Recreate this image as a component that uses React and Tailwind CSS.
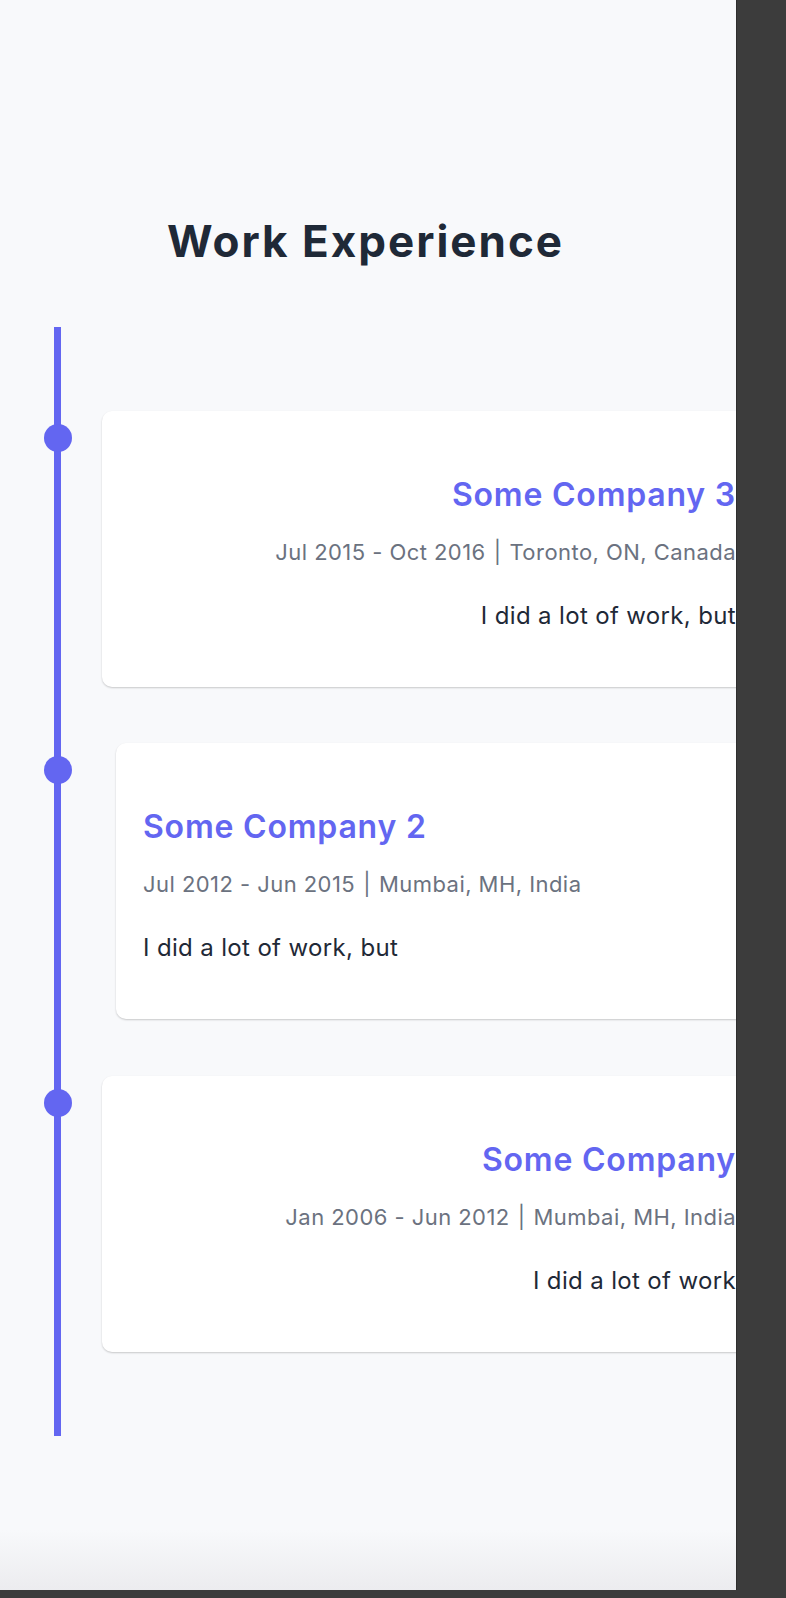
const jobs = [
  {
    company: "Some Company 3",
    dates: "Jul 2015 - Oct 2016",
    place: "Toronto, ON, Canada",
    text: "I did a lot of work, but",
    side: "right",
  },
  {
    company: "Some Company 2",
    dates: "Jul 2012 - Jun 2015",
    place: "Mumbai, MH, India",
    text: "I did a lot of work, but",
    side: "left",
  },
  {
    company: "Some Company",
    dates: "Jan 2006 - Jun 2012",
    place: "Mumbai, MH, India",
    text: "I did a lot of work",
    side: "right",
  },
];

const JobCard = ({ job, index }) => {
  const right = job.side === "right";
  return (
    <div className={`relative ${index === 1 ? "mt-[56px]" : null} ${index === 2 ? "mt-[57px]" : null}`}>
      <span className="absolute left-[-17px] top-[13px] w-[28px] h-[28px] rounded-full bg-[#6366f1]" />
      <div
        className={`bg-white rounded-[10px] shadow-[0_1px_2px_rgba(0,0,0,0.2)] h-[276px] pt-[68px] mr-[-40px] ${
          right ? "ml-[41px] pr-[40px] text-right" : "ml-[55px] pl-[27px] text-left"
        }`}
      >
        <div className="text-[32px] leading-[32px] font-semibold tracking-[0.8px] text-[#6366f1] whitespace-nowrap">
          {job.company}
        </div>
        <div className="mt-[30px] text-[22px] leading-[22px] tracking-[0.45px] text-[#6b7280] whitespace-nowrap">
          {job.dates}
          <span className="mx-[8px]">|</span>
          {job.place}
        </div>
        <div className="mt-[41px] text-[24px] leading-[24px] tracking-[0.35px] text-[#1f2937] whitespace-nowrap">
          {job.text}
        </div>
      </div>
    </div>
  );
};

const App = () => {
  return (
    <div className="flex w-full h-[1598px] bg-[#3c3c3c] font-['Inter',sans-serif]">
      <div className="flex flex-col w-[737px] h-[1590px] bg-[#f8f9fb] overflow-hidden border-r border-[#2e2e2e]">
        <h1 className="pt-[219px] pl-[167px] text-[44px] leading-[44px] font-bold tracking-[2px] text-[#1f2937] whitespace-nowrap">
          Work Experience
        </h1>
        <div className="mt-[64px] ml-[54px] border-l-[7px] border-[#6366f1] py-[84px] flex flex-col">
          {jobs.map((job, i) => (
            <JobCard key={job.company} job={job} index={i} />
          ))}
        </div>
        <div className="mt-auto h-[60px] bg-gradient-to-b from-[#f8f9fb] to-[#ececef]" />
      </div>
    </div>
  );
};

export default App;
